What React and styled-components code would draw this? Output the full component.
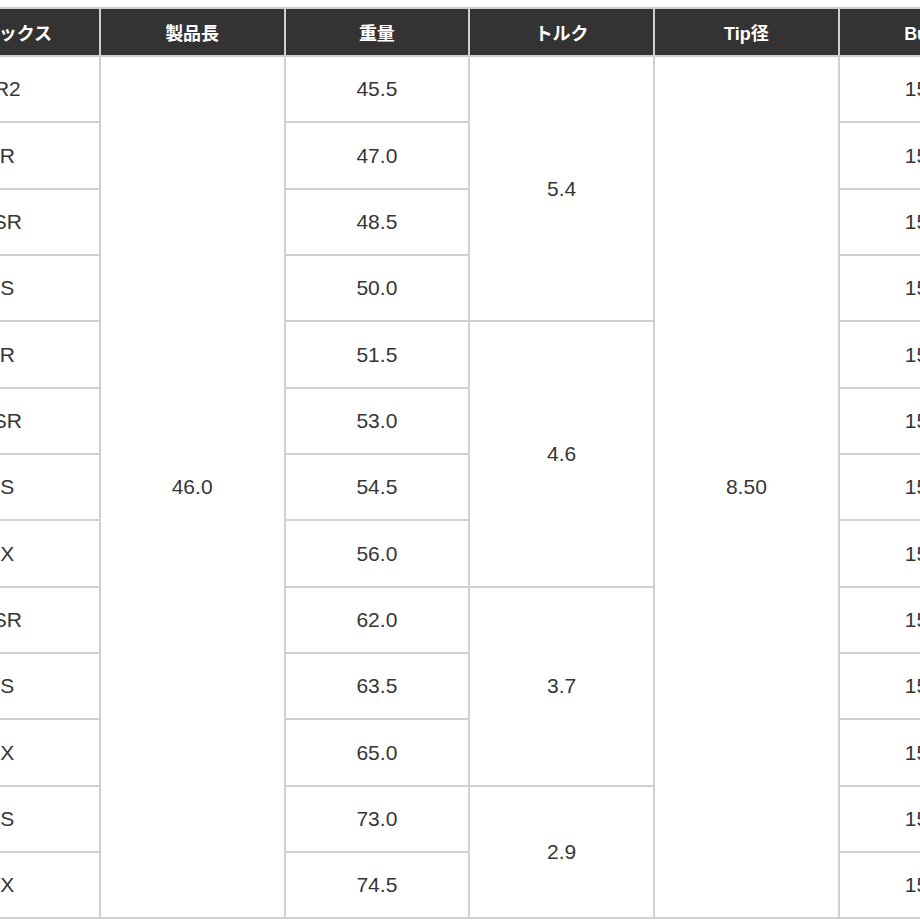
import React from "react";
import styled, { createGlobalStyle } from "styled-components";

const Global = createGlobalStyle`
  html, body { margin: 0; padding: 0; background: #fff; }
  body { font-family: "Liberation Sans", "Noto Sans CJK JP", Arial, sans-serif; }
`;

const Viewport = styled.div`
  width: 920px;
  height: 920px;
  overflow: hidden;
  padding-top: 7px;
  box-sizing: border-box;
`;

const Table = styled.table`
  margin-left: -86px;
  border-collapse: collapse;
  table-layout: fixed;
  width: ${6 * 184.75}px;
`;

const Col = styled.col`
  width: 184.75px;
`;

const Th = styled.th`
  height: 46px;
  padding: 0;
  background: #333333;
  color: #ffffff;
  font-family: "Liberation Sans", "Noto Sans CJK JP", sans-serif;
  font-weight: 700;
  font-size: 18px;
  text-align: center;
  vertical-align: middle;
  border: 2px solid #cfcfcf;
  white-space: nowrap;
`;

const Td = styled.td`
  height: 64.35px;
  padding: 0;
  color: #363636;
  font-family: "Liberation Sans", Arial, sans-serif;
  font-size: 21px;
  text-align: center;
  vertical-align: middle;
  border: 2px solid #d0d0d0;
  white-space: nowrap;
`;

const flex = ["R2", "R", "SR", "S", "R", "SR", "S", "X", "SR", "S", "X", "S", "X"];
const weight = ["45.5", "47.0", "48.5", "50.0", "51.5", "53.0", "54.5", "56.0", "62.0", "63.5", "65.0", "73.0", "74.5"];
const torque = { 0: ["5.4", 4], 4: ["4.6", 4], 8: ["3.7", 3], 11: ["2.9", 2] };

export default function App() {
  return (
    <>
      <Global />
      <Viewport>
        <Table>
          <colgroup>
            {Array.from({ length: 6 }).map((_, i) => (
              <Col key={i} />
            ))}
          </colgroup>
          <thead>
            <tr>
              <Th>フレックス</Th>
              <Th>製品長</Th>
              <Th>重量</Th>
              <Th>トルク</Th>
              <Th>Tip径</Th>
              <Th>Butt径</Th>
            </tr>
          </thead>
          <tbody>
            {flex.map((f, i) => (
              <tr key={i}>
                <Td>{f}</Td>
                {i === 0 && <Td rowSpan={13}>46.0</Td>}
                <Td>{weight[i]}</Td>
                {torque[i] && <Td rowSpan={torque[i][1]}>{torque[i][0]}</Td>}
                {i === 0 && <Td rowSpan={13}>8.50</Td>}
                <Td>15.20</Td>
              </tr>
            ))}
          </tbody>
        </Table>
      </Viewport>
    </>
  );
}
